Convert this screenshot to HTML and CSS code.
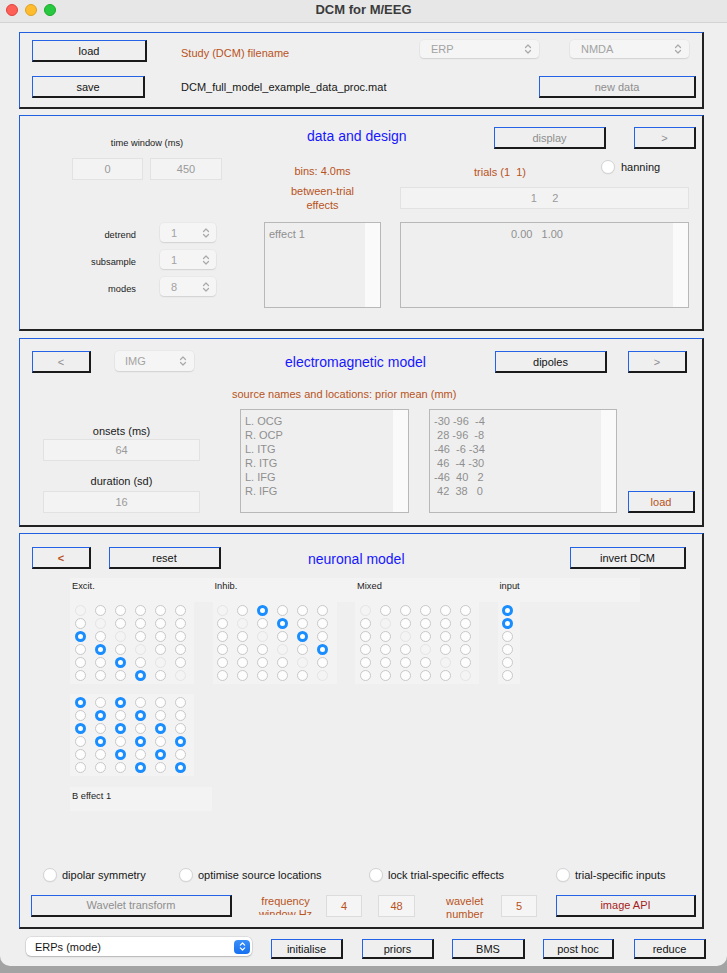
FILE: index.html
```html
<!DOCTYPE html>
<html>
<head>
<meta charset="utf-8">
<title>DCM for M/EEG</title>
<link rel="stylesheet" href="styles.css">
</head>
<body>
<div class="window">
  <div class="titlebar">
    <div class="lights"><span class="light red"></span><span class="light yellow"></span><span class="light green"></span></div>
    <div class="title">DCM for M/EEG</div>
    <div></div>
  </div>

  <div class="content">
    <!-- Panel 1 -->
    <section class="panel p1">
      <div class="row p1a">
        <div class="btn" style="width:115px">load</div>
        <div class="lbl orange p1-study">Study (DCM) filename</div>
        <div class="popup dis w119"><span>ERP</span><svg class="chev" viewBox="0 0 8 12"><path d="M1.5 4.5 L4 2 L6.5 4.5 M1.5 7.5 L4 10 L6.5 7.5"/></svg></div>
        <div class="popup dis w119 ml31"><span>NMDA</span><svg class="chev" viewBox="0 0 8 12"><path d="M1.5 4.5 L4 2 L6.5 4.5 M1.5 7.5 L4 10 L6.5 7.5"/></svg></div>
      </div>
      <div class="row p1b">
        <div class="btn" style="width:113px">save</div>
        <div class="lbl p1-file">DCM_full_model_example_data_proc.mat</div>
        <div class="btn gray" style="width:157px">new data</div>
      </div>
    </section>

    <!-- Panel 2 -->
    <section class="panel p2">
      <div class="p2-left">
        <div class="tw">
          <div class="small tw-label">time window (ms)</div>
          <div class="tw-fields">
            <div class="field" style="width:71px">0</div>
            <div class="field" style="width:72px">450</div>
          </div>
        </div>
        <div class="setrow first"><div class="small setlbl">detrend</div><div class="popup dis sel"><span>1</span><svg class="chev" viewBox="0 0 8 12"><path d="M1.5 4.5 L4 2 L6.5 4.5 M1.5 7.5 L4 10 L6.5 7.5"/></svg></div></div>
        <div class="setrow"><div class="small setlbl">subsample</div><div class="popup dis sel"><span>1</span><svg class="chev" viewBox="0 0 8 12"><path d="M1.5 4.5 L4 2 L6.5 4.5 M1.5 7.5 L4 10 L6.5 7.5"/></svg></div></div>
        <div class="setrow"><div class="small setlbl">modes</div><div class="popup dis sel"><span>8</span><svg class="chev" viewBox="0 0 8 12"><path d="M1.5 4.5 L4 2 L6.5 4.5 M1.5 7.5 L4 10 L6.5 7.5"/></svg></div></div>
      </div>
      <div class="p2-right">
        <div class="row p2-head">
          <div class="ptitle p2-title">data and design</div>
          <div class="btn gray" style="width:112px">display</div>
          <div class="btn gray ml28" style="width:62px">&gt;</div>
        </div>
        <div class="row p2-body">
          <div class="p2-mid">
            <div class="orange bins">bins: 4.0ms</div>
            <div class="orange btw">between-trial<br>effects</div>
            <div class="listbox lb-effect"><div class="items">effect 1</div><div class="track"></div></div>
          </div>
          <div class="p2-r">
            <div class="row trials-row">
              <div class="orange trials">trials (1&nbsp;&nbsp;1)</div>
              <div class="radio-item"><span class="rb"></span><span>hanning</span></div>
            </div>
            <div class="field trials-field"><span class="pre">1     2</span></div>
            <div class="listbox lb-c"><div class="items center">0.00&nbsp;&nbsp;&nbsp;1.00</div><div class="track"></div></div>
          </div>
        </div>
      </div>
    </section>

    <!-- Panel 3 -->
    <section class="panel p3">
      <div class="row p3-head">
        <div class="btn gray ml12" style="width:59px">&lt;</div>
        <div class="popup dis img"><span>IMG</span><svg class="chev" viewBox="0 0 8 12"><path d="M1.5 4.5 L4 2 L6.5 4.5 M1.5 7.5 L4 10 L6.5 7.5"/></svg></div>
        <div class="ptitle p3-title">electromagnetic model</div>
        <div class="btn" style="width:112px">dipoles</div>
        <div class="btn gray ml21" style="width:59px">&gt;</div>
      </div>
      <div class="row p3-body">
        <div class="p3-left">
          <div class="lbl-c onsets">onsets (ms)</div>
          <div class="field f64">64</div>
          <div class="lbl-c duration">duration (sd)</div>
          <div class="field f16">16</div>
        </div>
        <div class="p3-right">
          <div class="orange srclbl">source names and locations: prior mean (mm)</div>
          <div class="row p3-lists">
            <div class="listbox lb-names"><div class="items">L. OCG<br>R. OCP<br>L. ITG<br>R. ITG<br>L. IFG<br>R. IFG</div><div class="track"></div></div>
            <div class="listbox lb-coords"><div class="items pre">-30 -96  -4
 28 -96  -8
-46  -6 -34
 46  -4 -30
-46  40   2
 42  38   0</div><div class="track"></div></div>
            <div class="btn orange p3-load">load</div>
          </div>
        </div>
      </div>
    </section>

    <!-- Panel 4 -->
    <section class="panel p4">
      <div class="row p4-head">
        <div class="btn orange bold ml12" style="width:59px">&lt;</div>
        <div class="btn ml18" style="width:112px">reset</div>
        <div class="ptitle p4-title">neuronal model</div>
        <div class="btn" style="width:116px">invert DCM</div>
      </div>
      <div class="grp-labels">
        <div class="small">Excit.</div>
        <div class="small">Inhib.</div>
        <div class="small">Mixed</div>
        <div class="small">input</div>
      </div>
      <div class="grids">
        <div class="gw">
          <div class="g">
            <i class="d"></i><i></i><i></i><i></i><i></i><i></i>
            <i></i><i class="d"></i><i></i><i></i><i></i><i></i>
            <i class="s"></i><i></i><i class="d"></i><i></i><i></i><i></i>
            <i></i><i class="s"></i><i></i><i class="d"></i><i></i><i></i>
            <i></i><i></i><i class="s"></i><i></i><i class="d"></i><i></i>
            <i></i><i></i><i></i><i class="s"></i><i></i><i class="d"></i>
          </div>
        </div>
        <div class="gw">
          <div class="g">
            <i class="d"></i><i></i><i class="s"></i><i></i><i></i><i></i>
            <i></i><i class="d"></i><i></i><i class="s"></i><i></i><i></i>
            <i></i><i></i><i class="d"></i><i></i><i class="s"></i><i></i>
            <i></i><i></i><i></i><i class="d"></i><i></i><i class="s"></i>
            <i></i><i></i><i></i><i></i><i class="d"></i><i></i>
            <i></i><i></i><i></i><i></i><i></i><i class="d"></i>
          </div>
        </div>
        <div class="gw">
          <div class="g">
            <i class="d"></i><i></i><i></i><i></i><i></i><i></i>
            <i></i><i class="d"></i><i></i><i></i><i></i><i></i>
            <i></i><i></i><i class="d"></i><i></i><i></i><i></i>
            <i></i><i></i><i></i><i class="d"></i><i></i><i></i>
            <i></i><i></i><i></i><i></i><i class="d"></i><i></i>
            <i></i><i></i><i></i><i></i><i></i><i class="d"></i>
          </div>
        </div>
        <div class="gw">
          <div class="g one">
            <i class="s"></i><i class="s"></i><i></i><i></i><i></i><i></i>
          </div>
        </div>
      </div>
      <div class="grids bgrid">
        <div class="gw">
          <div class="g">
            <i class="s"></i><i></i><i class="s"></i><i></i><i></i><i></i>
            <i></i><i class="s"></i><i></i><i class="s"></i><i></i><i></i>
            <i class="s"></i><i></i><i class="s"></i><i></i><i class="s"></i><i></i>
            <i></i><i class="s"></i><i></i><i class="s"></i><i></i><i class="s"></i>
            <i></i><i></i><i class="s"></i><i></i><i class="s"></i><i></i>
            <i></i><i></i><i></i><i class="s"></i><i></i><i class="s"></i>
          </div>
        </div>
      </div>
      <div class="blabel small">B effect 1</div>

      <div class="row opts">
        <div class="radio-item o1"><span class="rb"></span><span>dipolar symmetry</span></div>
        <div class="radio-item o2"><span class="rb"></span><span>optimise source locations</span></div>
        <div class="radio-item o3"><span class="rb"></span><span>lock trial-specific effects</span></div>
        <div class="radio-item o4"><span class="rb"></span><span>trial-specific inputs</span></div>
      </div>

      <div class="row wave">
        <div class="btn gray ml11" style="width:201px">Wavelet transform</div>
        <div class="orange twol freq">frequency<br>window Hz</div>
        <div class="field ofield f4">4</div>
        <div class="field ofield f48">48</div>
        <div class="orange twol wnum">wavelet<br>number</div>
        <div class="field ofield f5">5</div>
        <div class="btn red api" style="width:140px">image API</div>
      </div>
    </section>

    <div class="row bottom">
      <div class="popup mode"><span>ERPs (mode)</span><span class="stepper"><svg viewBox="0 0 8 12"><path d="M1.5 4.5 L4 2 L6.5 4.5 M1.5 7.5 L4 10 L6.5 7.5"/></svg></span></div>
      <div class="btn sm" style="width:72px;margin-left:19px">initialise</div>
      <div class="btn sm" style="width:72px;margin-left:19px">priors</div>
      <div class="btn sm" style="width:73px;margin-left:18px">BMS</div>
      <div class="btn sm" style="width:71px;margin-left:18px">post hoc</div>
      <div class="btn sm" style="width:72px;margin-left:20px">reduce</div>
    </div>
  </div>
</div>
</body>
</html>
```

FILE: styles.css
```css
* { box-sizing: border-box; margin: 0; padding: 0; }

body {
  margin: 0;
  width: 727px;
  height: 973px;
  overflow: hidden;
  background: #a3a3a3;
  font-family: "Liberation Sans", Arial, Helvetica, sans-serif;
  font-size: 11px;
  color: #161616;
}

.window {
  width: 727px;
  height: 966px;
  background: #efefef;
  border-radius: 0 0 10px 10px;
  overflow: hidden;
}

/* title bar */
.titlebar {
  height: 23px;
  background: #e7e7e7;
  border-bottom: 1px solid #d3d3d3;
  display: grid;
  grid-template-columns: 1fr auto 1fr;
  align-items: center;
  padding-bottom: 3px;
}
.lights { display: flex; gap: 7px; padding-left: 6px; }
.light { width: 12px; height: 12px; border-radius: 50%; display: block; }
.red { background: #fe5f57; border: 0.5px solid #e0443e; }
.yellow { background: #febc2e; border: 0.5px solid #dea123; }
.green { background: #28c840; border: 0.5px solid #1aab29; }
.title { font-weight: bold; font-size: 13px; color: #3b3b3b; }

.content { padding: 9px 0 0 19px; }

.row { display: flex; }

/* panels */
.panel {
  width: 685px;
  border-style: solid;
  border-width: 1px 2px 2px 1px;
  border-color: #1f5fe0 #222 #222 #1f5fe0;
}
.p1 { height: 77px; padding: 7px 0 0 12px; }
.p2 { height: 216px; margin-top: 6px; display: flex; }
.p3 { height: 189px; margin-top: 7px; padding-top: 12px; }
.p4 { height: 396px; margin-top: 6px; padding-top: 13px; }

/* controls */
.btn {
  height: 22px;
  display: flex;
  align-items: center;
  justify-content: center;
  background: #efefef;
  border-style: solid;
  border-width: 1px 2px 2px 1px;
  border-color: #2462e6 #1a1a1a #1a1a1a #2462e6;
  color: #141414;
  flex: none;
}
.btn.sm { height: 20px; }
.gray { color: #8e8e8e; }
.orange { color: #b8531c; }
.red { color: #a51d1d; }
.bold { font-weight: bold; }

.popup {
  height: 18px;
  border-radius: 4px;
  background: #f5f5f5;
  box-shadow: 0 0 0 0.5px rgba(0, 0, 0, 0.05), 0 1px 1.5px rgba(0, 0, 0, 0.1);
  display: flex;
  align-items: center;
  justify-content: space-between;
  padding: 0 7px 0 11px;
  color: #a3a3a3;
  flex: none;
}
.chev { width: 8px; height: 12px; }
.chev path, .stepper path {
  fill: none;
  stroke: #a9a9a9;
  stroke-width: 1.2;
  stroke-linecap: round;
  stroke-linejoin: round;
}
.w119 { width: 119px; }
.ml31 { margin-left: 31px; }
.ml28 { margin-left: 28px; }
.ml21 { margin-left: 21px; }
.ml12 { margin-left: 12px; }
.ml18 { margin-left: 18px; }
.ml11 { margin-left: 11px; }

.field {
  height: 22px;
  background: #f3f3f3;
  border: 1px solid #e2e2e2;
  display: flex;
  align-items: center;
  justify-content: center;
  color: #9a9a9a;
  flex: none;
}
.pre { white-space: pre; }

.listbox {
  border: 1px solid #b8b8b8;
  background: #efefef;
  display: flex;
  flex: none;
}
.listbox .items {
  flex: 1;
  padding: 4px 0 0 4px;
  line-height: 14px;
  color: #8f8f8f;
}
.listbox .items.center { text-align: center; padding-left: 0; }
.listbox .track { width: 15px; background: #fafafa; }

.small { font-size: 9.3px; color: #1c1c1c; }
.ptitle { font-size: 14px; color: #1717ff; line-height: 18px; flex: none; }

.rb {
  width: 14px;
  height: 14px;
  border-radius: 50%;
  background: #fff;
  border: 1px solid #d4d4d4;
  box-shadow: 0 0.5px 1px rgba(0, 0, 0, 0.08);
  flex: none;
}
.radio-item { display: flex; align-items: center; gap: 6px; flex: none; }

/* panel 1 */
.p1a { height: 22px; }
.p1a .lbl { width: 239px; margin-left: 34px; padding-top: 3px; align-self: center; }
.p1b { height: 22px; margin-top: 14px; align-items: center; }
.p1b .lbl { width: 358px; margin-left: 36px; }

/* panel 2 */
.p2-left { width: 230px; flex: none; }
.tw { margin-left: 52px; width: 150px; }
.tw-label { margin-top: 21px; line-height: 12px; text-align: center; }
.tw-fields { display: flex; gap: 7px; margin-top: 9px; }
.setrow { display: flex; height: 19px; margin-top: 8px; }
.setrow.first { margin-top: 43px; }
.setlbl { width: 116px; text-align: right; padding-top: 6px; line-height: 12px; }
.popup.sel { width: 56px; height: 19px; margin-left: 24px; padding-left: 11px; padding-right: 6px; }

.p2-right { width: 452px; flex: none; }
.p2-head { height: 22px; margin-top: 11px; }
.p2-title { margin-left: 57px; width: 187px; }
.p2-mid { margin-left: 14px; width: 117px; text-align: center; flex: none; }
.bins { margin-top: 15px; line-height: 14px; }
.btw { margin-top: 6px; line-height: 14px; }
.lb-effect { margin-top: 10px; height: 86px; width: 117px; text-align: left; }
.p2-r { margin-left: 19px; width: 289px; flex: none; }
.trials-row { height: 30px; }
.trials { margin-left: 74px; width: 127px; margin-top: 16px; line-height: 14px; }
.trials-row .radio-item { margin-top: 11px; height: 14px; align-self: flex-start; }
.trials-field { margin-top: 8px; width: 289px; }
.lb-c { margin-top: 13px; height: 86px; width: 289px; }

/* panel 3 */
.p3-head { height: 22px; }
.popup.img { width: 79px; height: 20px; margin-left: 24px; padding-left: 10px; }
.p3-title { margin-left: 91px; width: 210px; line-height: 22px; }
.p3-body { align-items: flex-start; }
.p3-left { margin-left: 23px; width: 157px; flex: none; }
.lbl-c { text-align: center; line-height: 14px; color: #1a1a1a; }
.onsets { margin-top: 51px; }
.f64 { margin-top: 1px; width: 157px; }
.duration { margin-top: 13px; }
.f16 { margin-top: 3px; width: 157px; }
.p3-right { margin-left: 32px; flex: none; }
.srclbl { margin-top: 14px; line-height: 14px; }
.p3-lists { margin-top: 8px; align-items: flex-end; }
.lb-names { margin-left: 8px; width: 169px; height: 104px; }
.lb-coords { margin-left: 20px; width: 188px; height: 104px; }
.p3-load { margin-left: 11px; width: 67px; }

/* panel 4 */
.p4-head { height: 22px; }
.p4-title { margin-left: 87px; width: 262px; margin-top: 3px; }
.grp-labels {
  margin: 9px 0 0 50px;
  width: 570px;
  height: 24px;
  background: #f3f3f3;
  display: flex;
}
.grp-labels div { width: 142.5px; padding: 2px 0 0 2px; line-height: 12px; flex: none; }
.grids { display: flex; margin-left: 50px; }
.gw { width: 142.5px; flex: none; }
.g {
  display: grid;
  grid-template-columns: repeat(6, 20px);
  grid-auto-rows: 13.1px;
  align-items: center;
  background: #f3f3f3;
  padding: 1.5px 0 1.5px 4.5px;
  width: 124px;
}
.g.one { grid-template-columns: 20px; width: 22px; }
.g i {
  display: block;
  width: 11px;
  height: 11px;
  border-radius: 50%;
  background: #fdfdfd;
  border: 1px solid #c8c8c8;
}
.g i.d { background: #f4f4f4; border-color: #e4e4e4; }
.g i.s { background: #fff; border: 3.5px solid #1a8dff; }
.bgrid { margin-top: 10.4px; }
.blabel {
  margin: 11.4px 0 0 50px;
  width: 142px;
  height: 24px;
  background: #f3f3f3;
  padding: 3px 0 0 2px;
  line-height: 12px;
}
.opts { margin-top: 57px; height: 14px; align-items: center; }
.opts .radio-item { gap: 5px; }
.o1 { margin-left: 23px; width: 136px; }
.o2 { width: 190px; }
.o3 { width: 187px; }
.wave { margin-top: 13px; height: 22px; }
.twol { line-height: 13.5px; text-align: center; width: 70px; flex: none; overflow: hidden; }
.freq { margin-left: 18.5px; height: 20px; }
.wnum { margin-left: 14.7px; height: 28px; }
.ofield { color: #b8531c; background: #f5f5f5; border-color: #dcdcdc; }
.f4 { margin-left: 5.5px; width: 36px; }
.f48 { margin-left: 16px; width: 37px; }
.f5 { margin-left: 1.3px; width: 36px; }
.api { margin-left: 19px; }

/* bottom row */
.bottom { margin-top: 8px; padding-left: 7px; align-items: flex-start; }
.popup.mode {
  width: 226px;
  height: 19px;
  background: #ffffff;
  border-radius: 5px;
  box-shadow: 0 0 0 0.5px rgba(0, 0, 0, 0.14), 0 1px 1.5px rgba(0, 0, 0, 0.18);
  color: #151515;
  padding: 0 2px 0 9px;
}
.bottom .btn.sm { margin-top: 2px; }
.stepper {
  width: 16px;
  height: 14px;
  border-radius: 4px;
  background: linear-gradient(#3b8ff8, #1670f0);
  display: flex;
  align-items: center;
  justify-content: center;
}
.stepper svg { width: 7px; height: 11px; }
.stepper path { stroke: #ffffff; stroke-width: 1.4; }
```
